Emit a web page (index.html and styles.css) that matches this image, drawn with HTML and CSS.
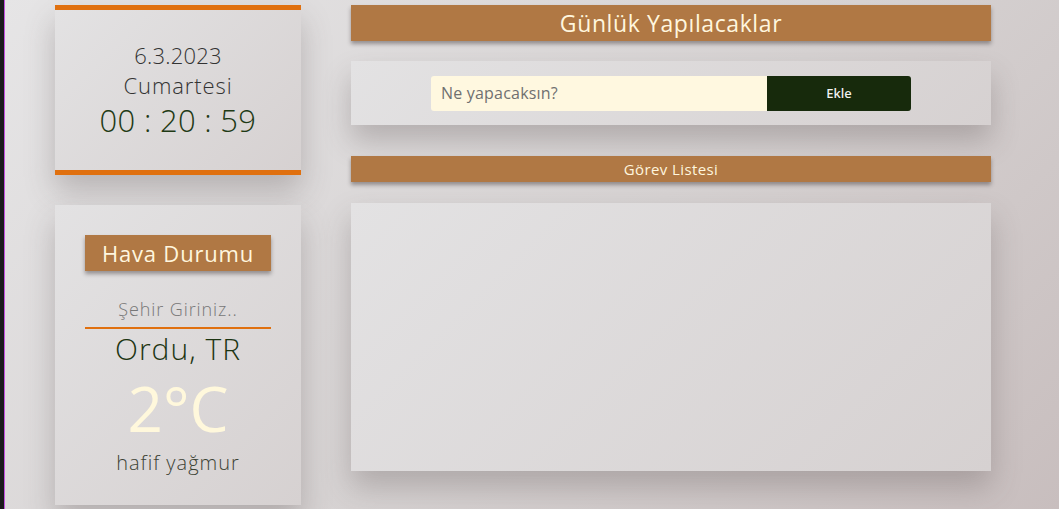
FILE: index.html
```html
<!DOCTYPE html>
<html lang="tr">
<head>
<meta charset="utf-8">
<title>Günlük Yapılacaklar</title>
<link rel="stylesheet" href="styles.css">
</head>
<body>
<div class="edge"></div>
<div class="page">
  <aside class="side">
    <section class="card clock">
      <div class="date">6.3.2023</div>
      <div class="day">Cumartesi</div>
      <div class="time">00 : 20 : 59</div>
    </section>
    <section class="card weather">
      <h2 class="badge">Hava Durumu</h2>
      <input class="city" type="text" placeholder="Şehir Giriniz..">
      <div class="place">Ordu, TR</div>
      <div class="temp">2°C</div>
      <div class="desc">hafif yağmur</div>
    </section>
  </aside>
  <main class="main">
    <h1 class="bar bar-big">Günlük Yapılacaklar</h1>
    <form class="card form">
      <input class="task" type="text" placeholder="Ne yapacaksın?">
      <button class="add" type="button">Ekle</button>
    </form>
    <h2 class="bar bar-small">Görev Listesi</h2>
    <section class="card list"></section>
  </main>
</div>
</body>
</html>
```

FILE: styles.css
```css
html, body {
  margin: 0;
  height: 100%;
}
body {
  display: flex;
  background: linear-gradient(135deg, #e6e5e6 0%, #d6d2d2 55%, #c8bebe 100%);
  font-family: "Open Sans", "Noto Sans", sans-serif;
  overflow: hidden;
}
.edge {
  width: 4px;
  flex: none;
  background: #1b1b1d;
  border-right: 1px solid #c24ee0;
}
.page {
  display: flex;
  gap: 50px;
  padding: 5px 0 0 50px;
}
.side {
  width: 246px;
  display: flex;
  flex-direction: column;
  gap: 30px;
}
.card {
  background: linear-gradient(135deg, #e3e2e3 0%, #d6d1d1 100%);
  box-shadow: 0 16px 28px rgba(80, 70, 70, 0.28);
}
.clock {
  height: 160px;
  border-top: 5px solid #e0700f;
  border-bottom: 5px solid #e0700f;
  display: flex;
  flex-direction: column;
  align-items: center;
  justify-content: center;
  color: #333;
}
.date {
  font-size: 22px;
  line-height: 30px;
  font-weight: 300;
  letter-spacing: 0.2px;
}
.day {
  font-size: 22px;
  line-height: 30px;
  font-weight: 300;
  letter-spacing: 0.9px;
}
.time {
  font-size: 31px;
  line-height: 40px;
  font-weight: 300;
  color: #1f3a15;
  letter-spacing: 0.3px;
}
.weather {
  height: 300px;
  display: flex;
  flex-direction: column;
  align-items: center;
  padding-top: 30px;
  box-sizing: border-box;
}
.badge {
  margin: 0;
  width: 186px;
  height: 36px;
  line-height: 36px;
  text-align: center;
  background: #b07844;
  color: #fff6de;
  font-size: 22px;
  font-weight: 400;
  letter-spacing: 0.8px;
  box-shadow: 0 3px 4px rgba(60, 50, 50, 0.45);
}
.city {
  margin-top: 24px;
  width: 186px;
  box-sizing: border-box;
  border: none;
  border-bottom: 2px solid #e0700f;
  background: transparent;
  text-align: center;
  font-family: inherit;
  font-size: 18px;
  font-weight: 300;
  letter-spacing: 0.9px;
  height: 34px;
  padding: 0 0 4px;
  outline: none;
}
.city::placeholder {
  color: #777;
}
.place {
  margin-top: 0;
  font-size: 30px;
  line-height: 40px;
  font-weight: 300;
  letter-spacing: 1px;
  color: #1c3512;
}
.temp {
  margin-top: 4px;
  font-size: 62px;
  line-height: 70px;
  font-weight: 400;
  color: #fff8dc;
}
.desc {
  margin-top: 7px;
  font-size: 20px;
  line-height: 26px;
  font-weight: 300;
  letter-spacing: 1px;
  color: #3c4234;
}
.main {
  width: 640px;
  display: flex;
  flex-direction: column;
}
.bar {
  margin: 0;
  background: #b07844;
  color: #fff6de;
  text-align: center;
  font-weight: 400;
  box-shadow: 0 3px 4px rgba(60, 50, 50, 0.45);
}
.bar-big {
  height: 36px;
  line-height: 36px;
  font-size: 23px;
  letter-spacing: 0.6px;
}
.form {
  margin: 20px 0 0;
  height: 64px;
  display: flex;
  align-items: center;
  justify-content: center;
}
.task {
  width: 336px;
  height: 35px;
  box-sizing: border-box;
  border: none;
  border-radius: 3px 0 0 3px;
  background: #fff8e0;
  padding: 0 10px;
  font-family: inherit;
  font-size: 16px;
  letter-spacing: 0.2px;
  outline: none;
}
.task::placeholder {
  color: #707070;
}
.add {
  width: 144px;
  height: 35px;
  border: none;
  border-radius: 0 3px 3px 0;
  background: #172a0c;
  color: #f2f2f2;
  font-family: "Noto Sans", "Open Sans", sans-serif;
  font-size: 13px;
  font-weight: 500;
}
.bar-small {
  margin-top: 31px;
  height: 26px;
  line-height: 26px;
  font-size: 15px;
  letter-spacing: 0.4px;
}
.list {
  margin-top: 21px;
  height: 268px;
}
```
